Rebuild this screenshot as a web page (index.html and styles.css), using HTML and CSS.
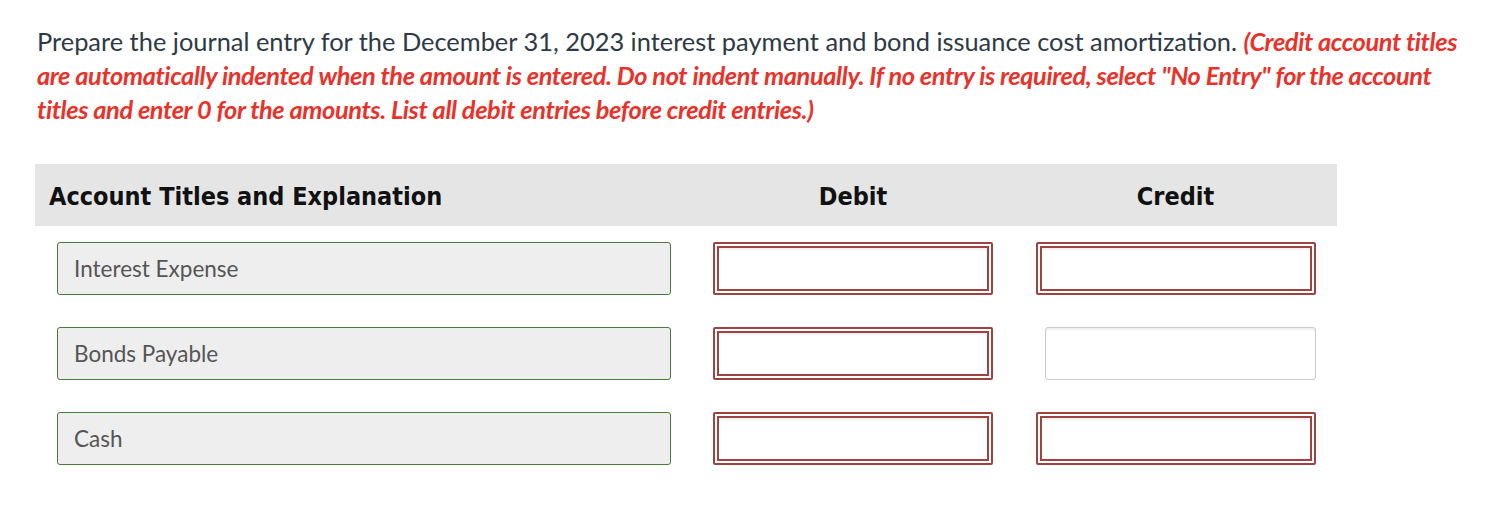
FILE: index.html
```html
<!DOCTYPE html>
<html>
<head>
  <title>Journal Entry</title>
  <link rel="stylesheet" href="styles.css">
</head>
<body>
  <div class="question">
    <p class="prompt">
      Prepare the journal entry for the December 31, 2023 interest payment and bond issuance cost amortization.
      <em class="note">(Credit account titles are automatically indented when the amount is entered. Do not indent manually. If no entry is required, select "No Entry" for the account titles and enter 0 for the amounts. List all debit entries before credit entries.)</em>
    </p>

    <div class="journal">
      <div class="journal-head">
        <div class="col-title">Account Titles and Explanation</div>
        <div class="col-amount">Debit</div>
        <div class="col-amount">Credit</div>
      </div>

      <div class="journal-row">
        <div class="col-title"><div class="account">Interest Expense</div></div>
        <div class="col-amount"><div class="amount flagged"></div></div>
        <div class="col-amount"><div class="amount flagged"></div></div>
      </div>

      <div class="journal-row">
        <div class="col-title"><div class="account">Bonds Payable</div></div>
        <div class="col-amount"><div class="amount flagged"></div></div>
        <div class="col-amount"><div class="amount plain"></div></div>
      </div>

      <div class="journal-row">
        <div class="col-title"><div class="account">Cash</div></div>
        <div class="col-amount"><div class="amount flagged"></div></div>
        <div class="col-amount"><div class="amount flagged"></div></div>
      </div>
    </div>
  </div>
</body>
</html>
```

FILE: styles.css
```css
:root {
  --text: #2d3a45;
  --note: #e8322a;
  --head-bg: #e5e5e5;
  --field-bg: #eeeeee;
  --ok: #4a7a3a;
  --bad: #9e4440;
}

body {
  margin: 0;
  font-family: Lato, "Open Sans", sans-serif;
  background: white;
  color: var(--text);
}

.question {
  width: 1436px;
  padding: 24px 0 0 37px;
}

.prompt {
  margin: 0 0 38px 0;
  font-size: 25.4px;
  line-height: 34px;
}

.note {
  color: var(--note);
  font-weight: 700;
  font-style: italic;
  letter-spacing: -0.4px;
}

.journal {
  width: 1302px;
  margin-left: -2px;
}

.journal-head,
.journal-row {
  display: grid;
  grid-template-columns: 657px 322px 323px;
  align-items: center;
}

.journal-head {
  height: 62px;
  padding-top: 2px;
  box-sizing: border-box;
  background: var(--head-bg);
  font-family: "DejaVu Sans Condensed", "DejaVu Sans", sans-serif;
  font-size: 25px;
  font-weight: 700;
  color: #111;
}

.journal-head .col-title {
  padding-left: 14px;
}

.journal-head .col-amount {
  text-align: center;
}

.journal-row {
  padding: 16px 0;
}

.journal-row .col-title {
  padding: 0 21px 0 22px;
}

.journal-row .col-amount {
  display: flex;
  justify-content: center;
}

.account {
  height: 53px;
  box-sizing: border-box;
  padding-left: 16px;
  display: flex;
  align-items: center;
  background: var(--field-bg);
  border: 1px solid var(--ok);
  border-radius: 3px;
  font-size: 22.5px;
  color: #555;
}

.amount {
  width: 280px;
  height: 53px;
  box-sizing: border-box;
  background: white;
  box-shadow: inset 0 2px 2px rgba(0, 0, 0, 0.06);
}

.amount.flagged {
  border: 6px double var(--bad);
  border-radius: 2px;
}

.amount.plain {
  width: 271px;
  margin-left: 9px;
  border: 1px solid #cccccc;
  border-radius: 3px;
}
```
